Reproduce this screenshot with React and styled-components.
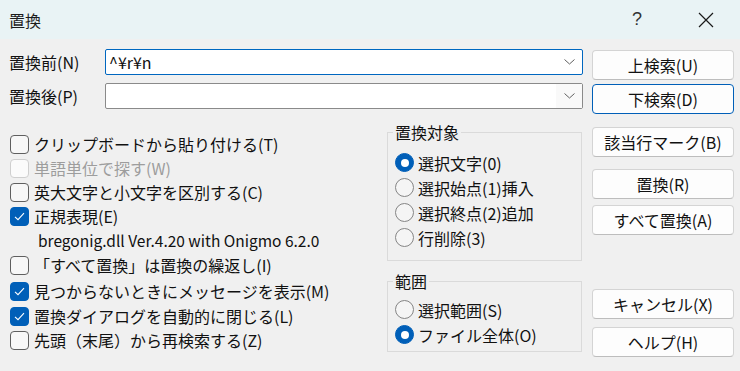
import React from 'react';
import styled, { createGlobalStyle } from 'styled-components';

const Global = createGlobalStyle`
  html, body { margin: 0; padding: 0; background: #f0f0f0; }
  body {
    font-family: "Noto Sans CJK JP", "Noto Sans", sans-serif;
  }
  * { box-sizing: border-box; }
`;

const Window = styled.div`
  width: 740px;
  height: 371px;
  background: #f0f0f0;
  display: flex;
  flex-direction: column;
  overflow: hidden;
  color: #111;
  font-size: 16px;
`;

const TitleBar = styled.div`
  height: 39px;
  flex: none;
  background: #e9f3f5;
  display: flex;
  align-items: center;
  padding: 0 11px 0 9px;
  gap: 23px;
`;

const Title = styled.div`
  flex: 1;
  font-size: 16px;
  color: #1c1c1c;
`;

const TitleButton = styled.div`
  width: 46px;
  height: 39px;
  display: flex;
  align-items: center;
  justify-content: center;
  color: #333;
  font-size: 18px;
  font-family: "Liberation Sans", sans-serif;
`;

const Body = styled.div`
  display: flex;
  padding: 10px 0 0 9px;
`;

const LeftArea = styled.div`
  width: 574px;
  display: flex;
  flex-direction: column;
`;

const FieldList = styled.div`
  display: flex;
  flex-direction: column;
  gap: 8px;
`;

const FieldRow = styled.div`
  display: flex;
  align-items: center;
  height: 26px;
`;

const FieldLabel = styled.div`
  width: 96px;
  white-space: nowrap;
`;

const Combo = styled.div`
  width: 478px;
  height: 26px;
  display: flex;
  align-items: center;
  background: #fff;
  border: 1px solid ${p => (p.$focused ? '#0067c0' : '#8a8a8a')};
  border-radius: 2px;
`;

const ComboText = styled.div`
  flex: 1;
  padding-left: 3px;
  font-size: 16px;
  white-space: nowrap;
`;

const ComboArrow = styled.div`
  width: 26px;
  height: 100%;
  display: flex;
  align-items: center;
  justify-content: center;
  background: ${p => (p.$shaded ? '#f9f9f9' : 'transparent')};
`;

const Lower = styled.div`
  display: flex;
  margin-top: 13px;
`;

const CheckList = styled.div`
  width: 378px;
  padding: 10px 0 0 1px;
  display: flex;
  flex-direction: column;
`;

const CheckRow = styled.div`
  height: 24px;
  display: flex;
  align-items: center;
  gap: 5px;
  margin-top: ${p => p.$mt || 0}px;
  white-space: nowrap;
  color: ${p => (p.$disabled ? '#9d9d9d' : '#111')};
`;

const InfoRow = styled.div`
  height: 24px;
  display: flex;
  align-items: center;
  padding-left: 28px;
  white-space: nowrap;
  font-size: 15.5px;
`;

const Box = styled.span`
  width: 19px;
  height: 19px;
  flex: none;
  border-radius: 4px;
  display: flex;
  align-items: center;
  justify-content: center;
  border: 1px solid ${p => (p.$checked ? '#005fb8' : p.$disabled ? '#cfcfcf' : '#5f5f5f')};
  background: ${p => (p.$checked ? '#005fb8' : p.$disabled ? '#fbfbfb' : '#f7f7f7')};
`;

const GroupColumn = styled.div`
  width: 195px;
  display: flex;
  flex-direction: column;
  gap: 10px;
`;

const Group = styled.fieldset`
  margin: 0;
  padding: ${p => p.$pt}px 0 ${p => p.$pb}px 7px;
  border: 1px solid #dadada;
  border-radius: 0;
  min-width: 0;
`;

const Legend = styled.legend`
  margin-left: -2px;
  padding: 0 2px;
  font-size: 16px;
  line-height: 20px;
  color: #111;
`;

const RadioRow = styled.div`
  height: 25px;
  display: flex;
  align-items: center;
  gap: 4px;
  white-space: nowrap;
`;

const RadioDot = styled.span`
  width: 19px;
  height: 19px;
  flex: none;
  border-radius: 50%;
  display: flex;
  align-items: center;
  justify-content: center;
  border: 1px solid ${p => (p.$checked ? '#005fb8' : '#858585')};
  background: ${p => (p.$checked ? '#005fb8' : '#f5f5f5')};
  &::after {
    content: '';
    display: ${p => (p.$checked ? 'block' : 'none')};
    width: 8px;
    height: 8px;
    border-radius: 50%;
    background: #fff;
  }
`;

const ButtonColumn = styled.div`
  width: 142px;
  margin-left: 9px;
  padding-top: 1px;
  display: flex;
  flex-direction: column;
`;

const Button = styled.div`
  height: 30px;
  margin-top: ${p => p.$mt || 0}px;
  display: flex;
  align-items: center;
  justify-content: center;
  background: #fdfdfd;
  border: 1px solid ${p => (p.$default ? '#005fb8' : '#d4d4d4')};
  border-bottom-color: ${p => (p.$default ? '#005fb8' : '#bdbdbd')};
  border-radius: 4px;
  font-size: 16px;
  color: #111;
  white-space: nowrap;
`;

const Chevron = () => (
  <svg width="11" height="6" viewBox="0 0 11 6">
    <path d="M0.5 0.5 L5.5 5 L10.5 0.5" fill="none" stroke="#606060" strokeWidth="1" />
  </svg>
);

const CheckMark = () => (
  <svg width="11" height="9" viewBox="0 0 11 9">
    <path d="M1 4.8 L4 7.6 L10 1.2" fill="none" stroke="#fff" strokeWidth="1.1" />
  </svg>
);

const CloseIcon = () => (
  <svg width="16" height="16" viewBox="0 0 16 16">
    <path d="M1 1 L15 15 M15 1 L1 15" stroke="#1a1a1a" strokeWidth="1.2" />
  </svg>
);

const Check = ({ checked, disabled, label, mt }) => (
  <CheckRow $disabled={disabled} $mt={mt}>
    <Box $checked={checked} $disabled={disabled}>{checked && <CheckMark />}</Box>
    <span>{label}</span>
  </CheckRow>
);

const Radio = ({ checked, label }) => (
  <RadioRow>
    <RadioDot $checked={checked} />
    <span>{label}</span>
  </RadioRow>
);

export default function App() {
  return (
    <>
      <Global />
      <Window>
        <TitleBar>
          <Title>置換</Title>
          <TitleButton>?</TitleButton>
          <TitleButton><CloseIcon /></TitleButton>
        </TitleBar>
        <Body>
          <LeftArea>
            <FieldList>
              <FieldRow>
                <FieldLabel>置換前(N)</FieldLabel>
                <Combo $focused>
                  <ComboText>^¥r¥n</ComboText>
                  <ComboArrow><Chevron /></ComboArrow>
                </Combo>
              </FieldRow>
              <FieldRow>
                <FieldLabel>置換後(P)</FieldLabel>
                <Combo>
                  <ComboText></ComboText>
                  <ComboArrow $shaded><Chevron /></ComboArrow>
                </Combo>
              </FieldRow>
            </FieldList>
            <Lower>
              <CheckList>
                <Check label="クリップボードから貼り付ける(T)" />
                <Check disabled label="単語単位で探す(W)" />
                <Check label="英大文字と小文字を区別する(C)" />
                <Check checked label="正規表現(E)" />
                <InfoRow>bregonig.dll Ver.4.20 with Onigmo 6.2.0</InfoRow>
                <Check mt={1} label="「すべて置換」は置換の繰返し(I)" />
                <Check mt={2} checked label="見つからないときにメッセージを表示(M)" />
                <Check mt={1} checked label="置換ダイアログを自動的に閉じる(L)" />
                <Check label="先頭（末尾）から再検索する(Z)" />
              </CheckList>
              <GroupColumn>
                <Group $pt={8} $pb={10}>
                  <Legend>置換対象</Legend>
                  <Radio checked label="選択文字(0)" />
                  <Radio label="選択始点(1)挿入" />
                  <Radio label="選択終点(2)追加" />
                  <Radio label="行削除(3)" />
                </Group>
                <Group $pt={6} $pb={4}>
                  <Legend>範囲</Legend>
                  <Radio label="選択範囲(S)" />
                  <Radio checked label="ファイル全体(O)" />
                </Group>
              </GroupColumn>
            </Lower>
          </LeftArea>
          <ButtonColumn>
            <Button>上検索(U)</Button>
            <Button $mt={4} $default>下検索(D)</Button>
            <Button $mt={13}>該当行マーク(B)</Button>
            <Button $mt={12}>置換(R)</Button>
            <Button $mt={6}>すべて置換(A)</Button>
            <Button $mt={54}>キャンセル(X)</Button>
            <Button $mt={8}>ヘルプ(H)</Button>
          </ButtonColumn>
        </Body>
      </Window>
    </>
  );
}
